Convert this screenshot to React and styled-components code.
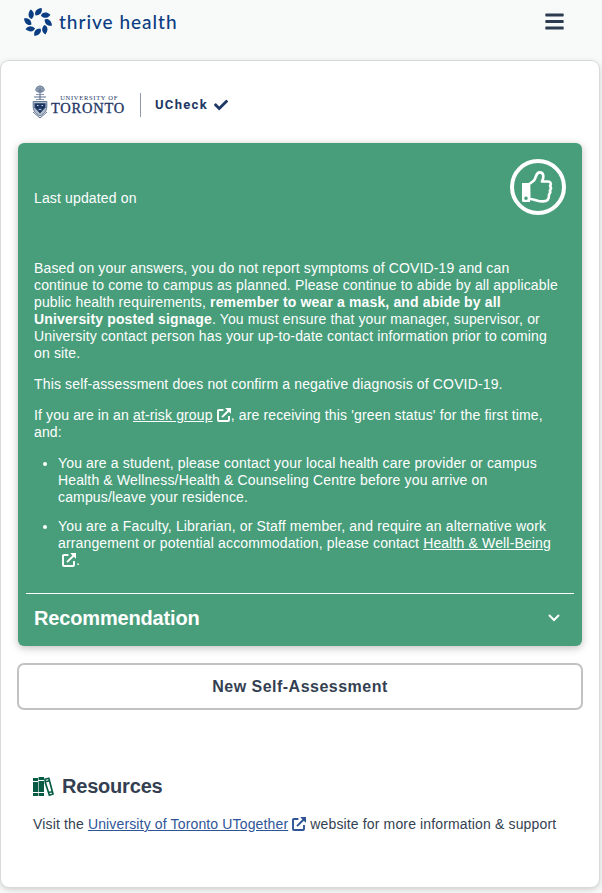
import React from 'react';
import styled, { createGlobalStyle } from 'styled-components';
import { FaBars, FaCheck } from 'react-icons/fa';

const Global = createGlobalStyle`
  * { box-sizing: border-box; }
  body { margin: 0; background: #f8faf9; font-family: "Liberation Sans", Arial, sans-serif; color: #343f52; }
  #root { height: 893px; overflow: hidden; }
`;
const Header = styled.header`
  height: 61px; padding: 8px 37px 0 24px; display: flex; align-items: flex-start; justify-content: space-between;
  svg { display: block; }
`;
const Brand = styled.div`
  display: flex; gap: 7px; align-items: center; color: #0b3d82; height: 28px;
  font: 500 19px/26px Lato, sans-serif; letter-spacing: .98px;
`;
const MenuButton = styled.button`
  border: 0; background: none; padding: 0; color: #2d3b50; margin-top: 3px;
`;
const Page = styled.main`
  height: 826px; width: 598px; margin-left: 1px; background: #fff; border-radius: 8px; padding: 20px 16px 0;
  box-shadow: 0 0 0 1px #d8dad9, 0 2px 7px rgba(0,0,0,.2);
`;
const Logos = styled.div`
  height: 42px; padding-left: 15px; display: flex; align-items: center; color: #1e3765;
`;
const University = styled.div`
  font-family: "Liberation Serif", serif; margin-left: 3px; width: 74px; padding-top: 5px; white-space: nowrap;
`;
const Small = styled.div`font-size: 6.5px; line-height: 7px; letter-spacing: .7px; text-align: right; padding-right: 7px;`;
const Large = styled.div`font-size: 14.5px; line-height: 14px; letter-spacing: .75px; -webkit-text-stroke: .3px #1e3765;`;
const Rule = styled.div`width: 1px; height: 24px; background: #8c99ab; margin: 5px 14px 0 15px;`;
const UCheck = styled.div`
  display: flex; align-items: center; gap: 6px; font: 700 13px/14px Roboto, sans-serif; letter-spacing: 1.3px; padding-top: 6px;
`;
const Status = styled.section`
  height: 503px; width: 564px; margin: 20px 1px 0; border-radius: 6px; background: #489e7b; color: #fff;
  box-shadow: 0 2px 8px rgba(0,0,0,.25); font-size: 14px; line-height: 17px; letter-spacing: .145px;
`;
const StatusTop = styled.div`height: 117px; padding: 16px 16px 0; display: flex; justify-content: space-between; svg { display: block; }`;
const Updated = styled.div`padding-top: 31px;`;
const Copy = styled.div`height: 333px; padding: 0 16px;`;
const Paragraph = styled.p`margin: 0 0 14px; white-space: nowrap;`;
const List = styled.ul`margin: 0; padding: 0 0 0 24px; white-space: nowrap;`;
const Item = styled.li`margin-bottom: 12px;`;
const Link = styled.a`text-decoration: underline; color: ${p => p.$color || 'inherit'};`;
const LinkIcon = styled.svg`width: 14px; height: 14px; margin-left: 4px; vertical-align: -2px; color: ${p => p.$color || 'inherit'};`;
const Recommendation = styled.div`
  margin: 0 8px; height: 53px; padding: 0 14px 4px 8px; border-top: 1px solid #fff; display: flex; align-items: center; justify-content: space-between;
  font-size: 20px; line-height: 24px; font-weight: 700; letter-spacing: -.16px;
`;
const NewButton = styled.button`
  display: block; width: 566px; height: 47px; margin: 17px 0 0; border: 2px solid #c2c2c2; border-radius: 7px; background: #fff;
  font: 700 16px/20px "Liberation Sans", Arial, sans-serif; letter-spacing: .48px; color: #343f52;
`;
const Resources = styled.section`padding: 64px 0 0 16px; font-size: 14px; line-height: 17px; letter-spacing: .145px; white-space: nowrap;`;
const Title = styled.h2`margin: 0 0 17px; height: 25px; display: flex; align-items: center; gap: 8px; font-size: 20px; line-height: 25px; letter-spacing: -.2px;`;

function External({ color }) {
  return <LinkIcon $color={color} viewBox="0 0 14 14" fill="none" stroke="currentColor" strokeWidth="1.9">
    <path d="M6.4 2H2q-1 0-1 1v9q0 1 1 1h9q1 0 1-1V8M5 9.2l6.7-6.7" />
    <path d="M8.2 0H14v5.7l-2-1.8-2-2Z" fill="currentColor" stroke="none" />
  </LinkIcon>;
}
function Flower() {
  return <svg width="28" height="28" viewBox="-14 -14 28 28" fill="currentColor">
    {[0,45,90,135,180,225,270,315].map(a => <path key={a} transform={`rotate(${a})`} d="M-2.4-6.6C-4-9.6-2-13.4 3.6-14 4.6-10 2.6-6.6-2.4-6.6Z" />)}
  </svg>;
}
function Crest() {
  return <svg width="16" height="34" viewBox="0 0 16 34" fill="none" stroke="#1e3765">
    <path d="M3.5 5l1.6-3 2-1H9l2 1 1.5 3-2 2h-5Z" fill="#9cabbd" stroke="#60738f" strokeWidth=".9" />
    <path d="m5 3 3 2 3-2M5 6h6M8 2v5" stroke="#60738f" strokeWidth=".8" />
    <path d="M8 7v8M2 12h12" stroke="#60738f" strokeWidth="1.2" /><path d="M4 9.5h8M4 14.5h8" stroke="#8093ac" />
    <path d="M1.2 16.5h13.6v5c0 4.8-3.2 7.6-6.8 9.5-3.6-1.9-6.8-4.7-6.8-9.5Z" fill="#b5c1cf" stroke="#60738f" strokeWidth="1" />
    <path d="M2.5 18.2h11v4.3L8 28.5l-5.5-6Z" fill="#1e3765" stroke="none" />
    <path d="M5 20.5h1.5M9.5 20.5H11M6.5 25 8 24l1.5 1" stroke="white" strokeWidth=".8" /><path d="M1 27l7 6 7-6" stroke="#60738f" strokeWidth="1" />
  </svg>;
}
function Thumb() {
  return <svg width="56" height="56" viewBox="0 0 56 56" fill="none" stroke="#fff">
    <circle cx="28" cy="28" r="26" strokeWidth="4" />
    <path d="M19 25.2 24 21.5C26 19 26 13.4 29.5 13.4c5 0 4.4 5.4 2.4 9.1h6c3 0 3.5 2.7 2.2 4.4 1.2 1.7 1 3.4-.3 4.5.8 1.5.4 3-.8 4 .4 5.6-2 7-6 7-6.1 0-8.2-2.4-13.7-2.4Z" strokeWidth="2.6" strokeLinejoin="round" />
    <path fillRule="evenodd" d="M12 24h8v19h-6.5q-1.5 0-1.5-1.5ZM16 37.5a1.8 1.8 0 1 0 0 3.6 1.8 1.8 0 0 0 0-3.6Z" fill="#fff" stroke="none" />
  </svg>;
}
function Books() {
  return <svg width="21" height="20" viewBox="0 0 21 20" fill="#075b44">
    <path d="M0 1h5v3H0ZM0 5h5v10H0ZM0 16h5v3H0ZM5.6 0h5.4v3H5.6ZM5.6 4H11v11H5.6ZM5.6 16H11v3H5.6Z" />
    <path d="m12 2.2 3.8-1 4.2 15.8-3.6 1.2L12.3 5.5Zm.5 2.6 4-1m-.8 11.7 4-1" fill="none" stroke="#075b44" strokeWidth="1.7" />
  </svg>;
}

export default function App() {
  return <><Global />
    <Header><Brand><Flower /><span>thrive health</span></Brand><MenuButton aria-label="Menu"><FaBars size={21} /></MenuButton></Header>
    <Page>
      <Logos><Crest /><University><Small>UNIVERSITY OF</Small><Large>TORONTO</Large></University><Rule /><UCheck>UCheck <FaCheck size={14} /></UCheck></Logos>
      <Status>
        <StatusTop><Updated>Last updated on</Updated><Thumb /></StatusTop>
        <Copy>
          <Paragraph>Based on your answers, you do not report symptoms of COVID-19 and can<br />continue to come to campus as planned. Please continue to abide by all applicable<br />public health requirements, <b>remember to wear a mask, and abide by all<br />University posted signage</b>. You must ensure that your manager, supervisor, or<br />University contact person has your up-to-date contact information prior to coming<br />on site.</Paragraph>
          <Paragraph>This self-assessment does not confirm a negative diagnosis of COVID-19.</Paragraph>
          <Paragraph>If you are in an <Link>at-risk group</Link><External />, are receiving this 'green status' for the first time,<br />and:</Paragraph>
          <List>
            <Item>You are a student, please contact your local health care provider or campus<br />Health &amp; Wellness/Health &amp; Counseling Centre before you arrive on<br />campus/leave your residence.</Item>
            <Item>You are a Faculty, Librarian, or Staff member, and require an alternative work<br />arrangement or potential accommodation, please contact <Link>Health &amp; Well-Being</Link><br /><External />.</Item>
          </List>
        </Copy>
        <Recommendation><span>Recommendation</span><svg width="12" height="8" viewBox="0 0 12 8" fill="none" stroke="#fff" strokeWidth="2"><path d="m1 1 5 5 5-5" /></svg></Recommendation>
      </Status>
      <NewButton>New Self-Assessment</NewButton>
      <Resources><Title><Books />Resources</Title><div>Visit the <Link $color="#2f5597">University of Toronto UTogether</Link><External color="#2f5597" /> website for more information &amp; support</div></Resources>
    </Page></>;
}
